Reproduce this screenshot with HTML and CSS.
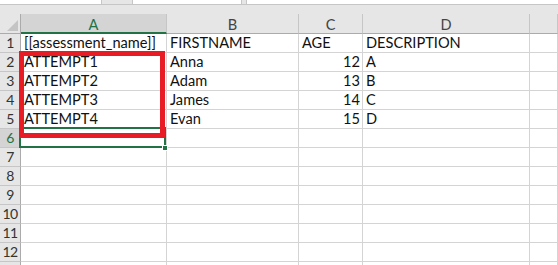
FILE: index.html
```html
<!DOCTYPE html>
<html>
<head>
<meta charset="UTF-8" />
<link rel="stylesheet" href="styles.css">
</head>
<body>
<div class="topbar">
  <div class="box box-name"></div>
  <div class="box box-mid"></div>
  <div class="box box-fx"></div>
</div>

<div class="sheet">
  <div class="hd corner"><span class="tri"></span></div>
  <div class="hd col sel">A</div>
  <div class="hd col">B</div>
  <div class="hd col">C</div>
  <div class="hd col">D</div>
  <div class="hd col"></div>

  <div class="rh">1</div><div class="c">[[assessment_name]]</div><div class="c">FIRSTNAME</div><div class="c">AGE</div><div class="c">DESCRIPTION</div><div class="c"></div>
  <div class="rh">2</div><div class="c">ATTEMPT1</div><div class="c">Anna</div><div class="c num">12</div><div class="c">A</div><div class="c"></div>
  <div class="rh">3</div><div class="c">ATTEMPT2</div><div class="c">Adam</div><div class="c num">13</div><div class="c">B</div><div class="c"></div>
  <div class="rh">4</div><div class="c">ATTEMPT3</div><div class="c">James</div><div class="c num">14</div><div class="c">C</div><div class="c"></div>
  <div class="rh">5</div><div class="c">ATTEMPT4</div><div class="c">Evan</div><div class="c num">15</div><div class="c">D</div><div class="c"></div>
  <div class="rh sel">6</div><div class="c"></div><div class="c"></div><div class="c"></div><div class="c"></div><div class="c"></div>
  <div class="rh">7</div><div class="c"></div><div class="c"></div><div class="c"></div><div class="c"></div><div class="c"></div>
  <div class="rh">8</div><div class="c"></div><div class="c"></div><div class="c"></div><div class="c"></div><div class="c"></div>
  <div class="rh">9</div><div class="c"></div><div class="c"></div><div class="c"></div><div class="c"></div><div class="c"></div>
  <div class="rh">10</div><div class="c"></div><div class="c"></div><div class="c"></div><div class="c"></div><div class="c"></div>
  <div class="rh">11</div><div class="c"></div><div class="c"></div><div class="c"></div><div class="c"></div><div class="c"></div>
  <div class="rh">12</div><div class="c"></div><div class="c"></div><div class="c"></div><div class="c"></div><div class="c"></div>
  <div class="rh"></div><div class="c"></div><div class="c"></div><div class="c"></div><div class="c"></div><div class="c"></div>

  <!-- active cell A6 -->
  <div class="active"><span class="handle"></span></div>
  <!-- red highlight drawn over the sheet -->
  <div class="mark"></div>
</div>
</body>
</html>
```

FILE: styles.css
```css
* {
  box-sizing: border-box;
  margin: 0;
  padding: 0;
}

html, body {
  width: 558px;
  height: 265px;
  overflow: hidden;
  background: #e6e6e6;
  font-family: Lato, "Liberation Sans", sans-serif;
}

div.topbar {
  display: flex;
  height: 5px;
  border-bottom: 1px solid #c6c6c6;
  margin-bottom: 9px;
}

div.topbar div.box {
  background: #fff;
  border-left: 1px solid #c6c6c6;
  border-right: 1px solid #c6c6c6;
}

div.topbar div.box-name { width: 102px; border-left: none; }
div.topbar div.box-mid { width: 110px; margin-left: 30px; }
div.topbar div.box-fx { flex: 1; margin-left: 4px; border-right: none; }

div.sheet {
  position: relative;
  display: grid;
  grid-template-columns: 21px 146px 132px 64px 167px 1fr;
  grid-template-rows: 20px repeat(13, 19px);
  background: #fff;
  font-size: 14.6px;
  color: #111;
}

div.sheet div.hd {
  background: #e6e6e6;
  border-bottom: 1px solid #ababab;
  border-right: 1px solid #c6c6c6;
  color: #444;
  display: flex;
  align-items: center;
  justify-content: center;
  padding-top: 2px;
}

div.sheet div.corner {
  position: relative;
  border-right-color: #ababab;
}

div.sheet div.corner span.tri {
  position: absolute;
  right: 2px;
  bottom: 2px;
  width: 0;
  height: 0;
  border-left: 11px solid transparent;
  border-bottom: 11px solid #c4c4c4;
}

div.sheet div.hd.sel {
  background: #d4d4d4;
  color: #217346;
  border-bottom: 2px solid #217346;
}

div.sheet div.rh {
  background: #e6e6e6;
  border-right: 1px solid #ababab;
  border-bottom: 1px solid #c6c6c6;
  color: #333;
  font-size: 14px;
  display: flex;
  align-items: flex-end;
  justify-content: center;
  padding-bottom: 1px;
  letter-spacing: -0.5px;
}

div.sheet div.rh.sel {
  background: #d4d4d4;
  color: #217346;
}

div.sheet div.c {
  border-right: 1px solid #d4d4d4;
  border-bottom: 1px solid #d4d4d4;
  display: flex;
  align-items: flex-end;
  padding: 0 3px 1px 3px;
  white-space: nowrap;
  overflow: visible;
}

div.sheet div.c.num {
  justify-content: flex-end;
  padding-right: 2px;
}

div.sheet div.active {
  position: absolute;
  left: 19px;
  top: 113px;
  width: 147px;
  height: 21px;
  border: 2px solid #217346;
}

div.sheet div.active span.handle {
  position: absolute;
  right: -4px;
  bottom: -5px;
  width: 6px;
  height: 6px;
  background: #217346;
  border: 1px solid #fff;
}

div.sheet div.mark {
  position: absolute;
  left: 19px;
  top: 37px;
  width: 146px;
  height: 87px;
  border: 5px solid #e81c24;
}
```
